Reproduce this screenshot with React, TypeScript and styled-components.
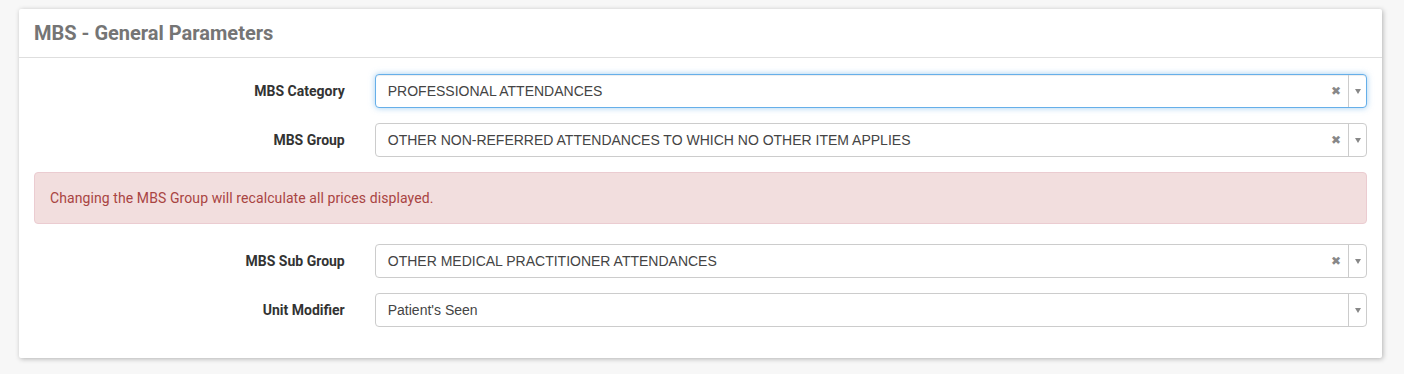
import React from 'react'
import styled, { createGlobalStyle } from 'styled-components'

const GlobalStyle = createGlobalStyle`
  body {
    margin: 0;
    background: #f7f7f7;
    font-family: Roboto, "Liberation Sans", Arial, sans-serif;
  }
`

const Page = styled.div`
  padding: 9px 22px 17px 19px;
`

const Card = styled.section`
  background: #fff;
  border-radius: 2px;
  box-shadow: 1px 1px 5px rgba(0, 0, 0, 0.28);
`

const CardHeader = styled.header`
  height: 48px;
  display: flex;
  align-items: center;
  padding: 0 15px;
  border-bottom: 1px solid #dedede;
`

const Title = styled.h2`
  margin: 0;
  font-size: 20px;
  font-weight: 700;
  color: #757575;
`

const CardBody = styled.div`
  padding: 16px 15px 16px;
  display: flex;
  flex-direction: column;
`

const FormRow = styled.div`
  display: flex;
  align-items: center;
  gap: 30px;
  margin-bottom: 15px;
`

const Label = styled.label`
  flex: 0 0 calc((100% + 30px) * 0.25 - 30px);
  text-align: right;
  font-size: 14px;
  font-weight: 700;
  color: #333;
`

const SelectBox = styled.div<{ $focused?: boolean }>`
  flex: 1;
  height: 34px;
  box-sizing: border-box;
  display: flex;
  align-items: stretch;
  border: 1px solid ${p => (p.$focused ? '#66afe9' : '#ccc')};
  border-radius: 4px;
  box-shadow: ${p =>
    p.$focused ? 'inset 0 1px 1px rgba(0,0,0,.075), 0 0 6px rgba(102,175,233,.6)' : 'none'};
  background: #fff;
`

const Value = styled.span`
  flex: 1;
  display: flex;
  align-items: center;
  padding-left: 12px;
  font-family: "Liberation Sans", Arial, sans-serif;
  font-size: 14px;
  color: #444;
`

const Clear = styled.span`
  width: 24px;
  display: flex;
  align-items: center;
  justify-content: center;
  font-family: "DejaVu Sans", sans-serif;
  font-size: 12px;
  color: #888;
`

const ArrowZone = styled.span`
  width: 17px;
  border-left: 1px solid #ccc;
  display: flex;
  align-items: center;
  justify-content: center;
  &::after {
    content: '';
    border-style: solid;
    border-width: 5px 3.5px 0;
    border-color: #888 transparent transparent;
  }
`

const Alert = styled.div`
  margin: 0 0 20px;
  padding: 15px;
  border: 1px solid #ebccd1;
  border-radius: 4px;
  background: #f2dede;
  color: #a94442;
  font-size: 14px;
  letter-spacing: 0.09px;
  line-height: 20px;
`

type Field = { label: string; value: string; clearable?: boolean; focused?: boolean }

const Select = ({ value, clearable, focused }: Field) => (
  <SelectBox $focused={focused}>
    <Value>{value}</Value>
    {clearable && <Clear>✖</Clear>}
    <ArrowZone />
  </SelectBox>
)

const Row = (f: Field) => (
  <FormRow>
    <Label>{f.label}</Label>
    <Select {...f} />
  </FormRow>
)

export default function App() {
  return (
    <Page>
      <GlobalStyle />
      <Card>
        <CardHeader>
          <Title>MBS - General Parameters</Title>
        </CardHeader>
        <CardBody>
          <Row label="MBS Category" value="PROFESSIONAL ATTENDANCES" clearable focused />
          <Row
            label="MBS Group"
            value="OTHER NON-REFERRED ATTENDANCES TO WHICH NO OTHER ITEM APPLIES"
            clearable
          />
          <Alert>Changing the MBS Group will recalculate all prices displayed.</Alert>
          <Row label="MBS Sub Group" value="OTHER MEDICAL PRACTITIONER ATTENDANCES" clearable />
          <Row label="Unit Modifier" value="Patient's Seen" />
        </CardBody>
      </Card>
    </Page>
  )
}
